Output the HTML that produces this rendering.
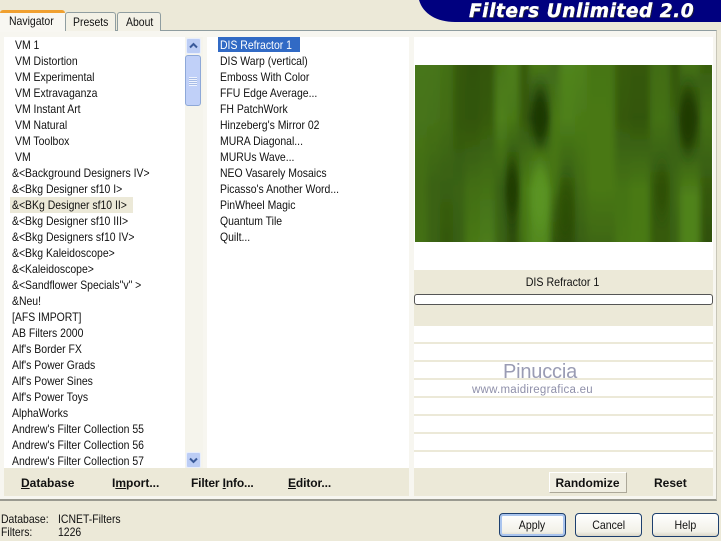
<!DOCTYPE html>
<html><head><meta charset="utf-8">
<style>
html,body{margin:0;padding:0}
body{width:721px;height:541px;overflow:hidden;background:#ece9d8;position:relative;font-family:"Liberation Sans",sans-serif;font-size:12px;color:#111}
.a{position:absolute}
.r{position:absolute;white-space:nowrap;line-height:16px;height:16px;transform:scaleX(.87);transform-origin:left center}
.b{position:absolute;font-weight:bold;white-space:nowrap;line-height:16px}
.btn{position:absolute;box-sizing:border-box;border:1px solid #1d3f6e;border-radius:4px;background:linear-gradient(#fff,#f2f1e8 80%,#dcd8c8);text-align:center;line-height:22px}
.btn span{display:inline-block;transform:scaleX(.88)}
.ln{position:absolute;left:414px;width:299px;height:2px;background:#ece9d8}
</style></head><body>
<div class="a" style="left:0;top:30px;width:717px;height:471px;background:#f7f6f0;border-top:1px solid #8f9da0;border-right:1px solid #c8c6b8;border-bottom:2px solid #9a9a90;box-sizing:border-box"></div>

<div class="a" style="left:0;top:10px;width:65px;height:22px;background:#f8f7f2;border-top:3px solid #f0a030;box-sizing:border-box;border-radius:3px 3px 0 0"></div>
<div class="r" style="left:9px;top:13px">Navigator</div>
<div class="a" style="left:65px;top:12px;width:51px;height:19px;background:#f3f1e6;border:1px solid #8f9da0;border-bottom:none;box-sizing:border-box;border-radius:3px 3px 0 0"></div>
<div class="r" style="left:73px;top:14px">Presets</div>
<div class="a" style="left:117px;top:12px;width:44px;height:19px;background:#f3f1e6;border:1px solid #8f9da0;border-bottom:none;box-sizing:border-box;border-radius:3px 3px 0 0"></div>
<div class="r" style="left:126px;top:14px">About</div>

<svg class="a" style="left:415px;top:0" width="306" height="23"><path d="M4 0H306V22H40C22 22 8 14 4 0Z" fill="#00007f"/></svg>
<div class="a" style="left:469px;top:0;width:230px;height:23px;font:italic bold 18.5px/23px 'DejaVu Sans',sans-serif;color:#fff;white-space:nowrap;letter-spacing:.55px;-webkit-text-stroke:.4px #fff;text-shadow:1px 1px 0 #223">Filters Unlimited 2.0</div>

<div class="a" style="left:4px;top:37px;width:181px;height:431px;background:#fff"></div>
<div class="a" style="left:185px;top:37px;width:18px;height:431px;background:#f5f4ec"></div>
<div class="a" style="left:207px;top:37px;width:202px;height:431px;background:#fff"></div>
<div class="a" style="left:414px;top:37px;width:299px;height:431px;background:#fff"></div>

<div class="a" style="left:186px;top:38px;width:15px;height:16px;border-radius:2px;background:#bccdf5;border:1px solid #e8eefc;box-sizing:border-box"></div>
<svg class="a" style="left:186px;top:38px" width="15" height="16"><path d="M4 9.5L7.5 6L11 9.5" fill="none" stroke="#3a5a9a" stroke-width="2"/></svg>
<div class="a" style="left:185px;top:55px;width:16px;height:51px;border-radius:3px;background:#c0d0f8;border:1px solid #8ea8d8;box-sizing:border-box"></div>
<div class="a" style="left:189px;top:77px;width:8px;height:9px;background:repeating-linear-gradient(#eef3fe 0,#eef3fe 1px,#a6bbe6 1px,#a6bbe6 2px)"></div>
<div class="a" style="left:186px;top:452px;width:15px;height:16px;border-radius:2px;background:#bccdf5;border:1px solid #e8eefc;box-sizing:border-box"></div>
<svg class="a" style="left:186px;top:452px" width="15" height="16"><path d="M4 6.5L7.5 10L11 6.5" fill="none" stroke="#3a5a9a" stroke-width="2"/></svg>

<div class="r" style="left:15px;top:37px">VM 1</div>
<div class="r" style="left:15px;top:53px">VM Distortion</div>
<div class="r" style="left:15px;top:69px">VM Experimental</div>
<div class="r" style="left:15px;top:85px">VM Extravaganza</div>
<div class="r" style="left:15px;top:101px">VM Instant Art</div>
<div class="r" style="left:15px;top:117px">VM Natural</div>
<div class="r" style="left:15px;top:133px">VM Toolbox</div>
<div class="r" style="left:15px;top:149px">VM</div>
<div class="r" style="left:12px;top:165px">&amp;&lt;Background Designers IV&gt;</div>
<div class="r" style="left:12px;top:181px">&amp;&lt;Bkg Designer sf10 I&gt;</div>
<div class="a" style="left:10px;top:197px;width:123px;height:16px;background:#ece9d8"></div>
<div class="r" style="left:12px;top:197px">&amp;&lt;BKg Designer sf10 II&gt;</div>
<div class="r" style="left:12px;top:213px">&amp;&lt;Bkg Designer sf10 III&gt;</div>
<div class="r" style="left:12px;top:229px">&amp;&lt;Bkg Designers sf10 IV&gt;</div>
<div class="r" style="left:12px;top:245px">&amp;&lt;Bkg Kaleidoscope&gt;</div>
<div class="r" style="left:12px;top:261px">&amp;&lt;Kaleidoscope&gt;</div>
<div class="r" style="left:12px;top:277px">&amp;&lt;Sandflower Specials"v" &gt;</div>
<div class="r" style="left:12px;top:293px">&amp;Neu!</div>
<div class="r" style="left:12px;top:309px">[AFS IMPORT]</div>
<div class="r" style="left:12px;top:325px">AB Filters 2000</div>
<div class="r" style="left:12px;top:341px">Alf's Border FX</div>
<div class="r" style="left:12px;top:357px">Alf's Power Grads</div>
<div class="r" style="left:12px;top:373px">Alf's Power Sines</div>
<div class="r" style="left:12px;top:389px">Alf's Power Toys</div>
<div class="r" style="left:12px;top:405px">AlphaWorks</div>
<div class="r" style="left:12px;top:421px">Andrew's Filter Collection 55</div>
<div class="r" style="left:12px;top:437px">Andrew's Filter Collection 56</div>
<div class="r" style="left:12px;top:453px">Andrew's Filter Collection 57</div>

<div class="a" style="left:218px;top:37px;width:82px;height:15px;background:#316ac5"></div>
<div class="r" style="left:220px;top:37px;color:#fff">DIS Refractor 1</div>
<div class="r" style="left:220px;top:53px">DIS Warp (vertical)</div>
<div class="r" style="left:220px;top:69px">Emboss With Color</div>
<div class="r" style="left:220px;top:85px">FFU Edge Average...</div>
<div class="r" style="left:220px;top:101px">FH PatchWork</div>
<div class="r" style="left:220px;top:117px">Hinzeberg's Mirror 02</div>
<div class="r" style="left:220px;top:133px">MURA Diagonal...</div>
<div class="r" style="left:220px;top:149px">MURUs Wave...</div>
<div class="r" style="left:220px;top:165px">NEO Vasarely Mosaics</div>
<div class="r" style="left:220px;top:181px">Picasso's Another Word...</div>
<div class="r" style="left:220px;top:197px">PinWheel Magic</div>
<div class="r" style="left:220px;top:213px">Quantum Tile</div>
<div class="r" style="left:220px;top:229px">Quilt...</div>

<svg class="a" style="left:415px;top:65px;filter:brightness(.92)" width="297" height="177" viewBox="0 0 297 177">
<defs>
<filter id="f" x="-20%" y="0" width="140%" height="100%"><feGaussianBlur stdDeviation="3.5 0"/></filter>
<filter id="h" x="-60%" y="-40%" width="220%" height="180%"><feGaussianBlur stdDeviation="3 9"/></filter>
<linearGradient id="c1" x2="0" y2="1"><stop offset="0" stop-color="#4e801c"/><stop offset=".3" stop-color="#4d7e1b"/><stop offset=".7" stop-color="#487616"/><stop offset="1" stop-color="#4a7a18"/></linearGradient>
<linearGradient id="c2" x2="0" y2="1"><stop offset="0" stop-color="#4d7f1b"/><stop offset=".3" stop-color="#4c7c1a"/><stop offset=".7" stop-color="#3f6a13"/><stop offset="1" stop-color="#3f6a13"/></linearGradient>
<linearGradient id="c3" x2="0" y2="1"><stop offset="0" stop-color="#4a7a18"/><stop offset=".3" stop-color="#487617"/><stop offset=".7" stop-color="#3d6712"/><stop offset="1" stop-color="#38600f"/></linearGradient>
<linearGradient id="c4" x2="0" y2="1"><stop offset="0" stop-color="#3a6110"/><stop offset=".3" stop-color="#38600f"/><stop offset=".7" stop-color="#3f6b14"/><stop offset="1" stop-color="#3d6712"/></linearGradient>
<linearGradient id="c5" x2="0" y2="1"><stop offset="0" stop-color="#355a0d"/><stop offset=".3" stop-color="#365b0d"/><stop offset=".7" stop-color="#487818"/><stop offset="1" stop-color="#4f8219"/></linearGradient>
<linearGradient id="c6" x2="0" y2="1"><stop offset="0" stop-color="#375c0e"/><stop offset=".3" stop-color="#3a620f"/><stop offset=".7" stop-color="#4a7b18"/><stop offset="1" stop-color="#528720"/></linearGradient>
<linearGradient id="c7" x2="0" y2="1"><stop offset="0" stop-color="#4f8219"/><stop offset=".3" stop-color="#558b1d"/><stop offset=".7" stop-color="#3d6812"/><stop offset="1" stop-color="#3f6b13"/></linearGradient>
<linearGradient id="c8" x2="0" y2="1"><stop offset="0" stop-color="#548a1d"/><stop offset=".3" stop-color="#4f8319"/><stop offset=".7" stop-color="#2a4b09"/><stop offset="1" stop-color="#30530b"/></linearGradient>
<linearGradient id="c9" x2="0" y2="1"><stop offset="0" stop-color="#3a6110"/><stop offset=".3" stop-color="#3a6110"/><stop offset=".7" stop-color="#508519"/><stop offset="1" stop-color="#4c7e18"/></linearGradient>
<linearGradient id="c10" x2="0" y2="1"><stop offset="0" stop-color="#4f8219"/><stop offset=".1" stop-color="#44701a"/><stop offset=".3" stop-color="#27470a"/><stop offset=".5" stop-color="#4a7a18"/><stop offset=".7" stop-color="#5a9520"/><stop offset="1" stop-color="#5a9520"/></linearGradient>
<linearGradient id="c11" x2="0" y2="1"><stop offset="0" stop-color="#47751a"/><stop offset=".3" stop-color="#4f8219"/><stop offset=".7" stop-color="#4c7d18"/><stop offset="1" stop-color="#35590d"/></linearGradient>
<linearGradient id="c12" x2="0" y2="1"><stop offset="0" stop-color="#578f20"/><stop offset=".3" stop-color="#548b1d"/><stop offset=".7" stop-color="#38600f"/><stop offset="1" stop-color="#30530c"/></linearGradient>
<linearGradient id="c13" x2="0" y2="1"><stop offset="0" stop-color="#568d1e"/><stop offset=".3" stop-color="#508519"/><stop offset=".7" stop-color="#477516"/><stop offset="1" stop-color="#3e6812"/></linearGradient>
<linearGradient id="c14" x2="0" y2="1"><stop offset="0" stop-color="#4d8019"/><stop offset=".3" stop-color="#4f8219"/><stop offset=".7" stop-color="#4f8219"/><stop offset="1" stop-color="#447015"/></linearGradient>
<linearGradient id="c15" x2="0" y2="1"><stop offset="0" stop-color="#3c6411"/><stop offset=".3" stop-color="#3a6110"/><stop offset=".7" stop-color="#4b7d18"/><stop offset="1" stop-color="#4d8019"/></linearGradient>
<linearGradient id="c16" x2="0" y2="1"><stop offset="0" stop-color="#3a6010"/><stop offset=".3" stop-color="#365c0e"/><stop offset=".7" stop-color="#4f8319"/><stop offset="1" stop-color="#508519"/></linearGradient>
<linearGradient id="c17" x2="0" y2="1"><stop offset="0" stop-color="#477617"/><stop offset=".3" stop-color="#4a7b18"/><stop offset=".7" stop-color="#38600f"/><stop offset="1" stop-color="#3a6210"/></linearGradient>
<linearGradient id="c18" x2="0" y2="1"><stop offset="0" stop-color="#375c0e"/><stop offset=".3" stop-color="#3d6812"/><stop offset=".7" stop-color="#437015"/><stop offset="1" stop-color="#3f6a13"/></linearGradient>
<linearGradient id="c19" x2="0" y2="1"><stop offset="0" stop-color="#4a7b18"/><stop offset=".3" stop-color="#2c4c08"/><stop offset=".5" stop-color="#3f6a13"/><stop offset=".75" stop-color="#578e1c"/><stop offset="1" stop-color="#578e1c"/></linearGradient>
<linearGradient id="c20" x2="0" y2="1"><stop offset="0" stop-color="#3c6510"/><stop offset=".3" stop-color="#4a7a18"/><stop offset=".7" stop-color="#3a6110"/><stop offset="1" stop-color="#335709"/></linearGradient>
</defs>
<g filter="url(#f)">
<rect x="-10" width="22" height="177" fill="url(#c1)"/>
<rect x="12" width="13" height="177" fill="url(#c2)"/>
<rect x="25" width="13" height="177" fill="url(#c3)"/>
<rect x="38" width="12" height="177" fill="url(#c4)"/>
<rect x="50" width="15" height="177" fill="url(#c5)"/>
<rect x="65" width="15" height="177" fill="url(#c6)"/>
<rect x="80" width="12" height="177" fill="url(#c7)"/>
<rect x="92" width="12" height="177" fill="url(#c8)"/>
<rect x="104" width="10" height="177" fill="url(#c9)"/>
<rect x="114" width="21" height="177" fill="url(#c10)"/>
<rect x="135" width="10" height="177" fill="url(#c11)"/>
<rect x="145" width="15" height="177" fill="url(#c12)"/>
<rect x="160" width="12" height="177" fill="url(#c13)"/>
<rect x="172" width="28" height="177" fill="url(#c14)"/>
<rect x="200" width="15" height="177" fill="url(#c15)"/>
<rect x="215" width="20" height="177" fill="url(#c16)"/>
<rect x="235" width="20" height="177" fill="url(#c17)"/>
<rect x="255" width="10" height="177" fill="url(#c18)"/>
<rect x="265" width="20" height="177" fill="url(#c19)"/>
<rect x="285" width="22" height="177" fill="url(#c20)"/>
</g>
<g filter="url(#h)">
<ellipse cx="125" cy="52" rx="7" ry="26" fill="#1f3d06"/>
<ellipse cx="97" cy="125" rx="6" ry="26" fill="#234206"/>
<ellipse cx="125" cy="132" rx="8" ry="32" fill="#64a424" opacity=".8"/>
<ellipse cx="150" cy="148" rx="9" ry="30" fill="#2f5209" opacity=".6"/>
<ellipse cx="273" cy="55" rx="8" ry="30" fill="#224006"/>
<ellipse cx="247" cy="125" rx="6" ry="24" fill="#2d4f0a" opacity=".6"/>
</g>
</svg>

<div class="a" style="left:414px;top:270px;width:299px;height:56px;background:#ece9d8"></div>
<div class="r" style="left:413px;top:274px;width:299px;text-align:center;transform-origin:center;transform:scaleX(.89)">DIS Refractor 1</div>
<div class="a" style="left:414px;top:294px;width:299px;height:11px;background:#fff;border:1px solid #555;border-radius:3px;box-sizing:border-box"></div>
<div class="ln" style="top:342px"></div>
<div class="ln" style="top:360px"></div>
<div class="ln" style="top:378px"></div>
<div class="ln" style="top:396px"></div>
<div class="ln" style="top:414px"></div>
<div class="ln" style="top:432px"></div>
<div class="ln" style="top:450px"></div>

<div class="a" style="left:503px;top:360px;font-size:20px;line-height:24px;color:#9a9cb4;letter-spacing:-.2px;white-space:nowrap">Pinuccia</div>
<div class="a" style="left:472px;top:383px;font-size:11.5px;line-height:14px;color:#8f90aa;letter-spacing:.25px;white-space:nowrap">www.maidiregrafica.eu</div>

<div class="a" style="left:4px;top:468px;width:405px;height:28px;background:#ece9d8"></div>
<div class="a" style="left:414px;top:468px;width:299px;height:28px;background:#ece9d8"></div>
<div class="b" style="left:21px;top:475px"><u>D</u>atabase</div>
<div class="b" style="left:112px;top:475px">I<u>m</u>port...</div>
<div class="b" style="left:191px;top:475px;letter-spacing:-.15px">Filter <u>I</u>nfo...</div>
<div class="b" style="left:288px;top:475px;letter-spacing:-.1px"><u>E</u>ditor...</div>
<div class="a" style="left:549px;top:472px;width:78px;height:21px;background:#f0eee2;border:1px solid;border-color:#fff #aca899 #aca899 #fff;box-sizing:border-box"></div>
<div class="b" style="left:549px;top:475px;width:77px;text-align:center">Randomize</div>
<div class="b" style="left:654px;top:475px">Reset</div>

<div class="r" style="left:1px;top:511px">Database:</div>
<div class="r" style="left:58px;top:511px">ICNET-Filters</div>
<div class="r" style="left:1px;top:524px">Filters:</div>
<div class="r" style="left:58px;top:524px">1226</div>

<div class="btn" style="left:499px;top:513px;width:67px;height:24px;box-shadow:inset 0 0 0 2px #a9c4ee"><span>Apply</span></div>
<div class="btn" style="left:575px;top:513px;width:67px;height:24px"><span>Cancel</span></div>
<div class="btn" style="left:652px;top:513px;width:67px;height:24px"><span>Help</span></div>
</body></html>
